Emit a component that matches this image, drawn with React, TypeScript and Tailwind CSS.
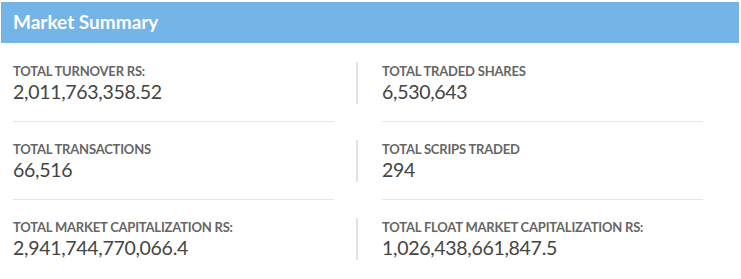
import React from "react";

const rows = [
  [
    { label: "TOTAL TURNOVER RS:", value: "2,011,763,358.52" },
    { label: "TOTAL TRADED SHARES", value: "6,530,643" },
  ],
  [
    { label: "TOTAL TRANSACTIONS", value: "66,516" },
    { label: "TOTAL SCRIPS TRADED", value: "294" },
  ],
  [
    { label: "TOTAL MARKET CAPITALIZATION RS:", value: "2,941,744,770,066.4" },
    { label: "TOTAL FLOAT MARKET CAPITALIZATION RS:", value: "1,026,438,661,847.5" },
  ],
];

function Cell({ label, value }: { label: string; value: string }) {
  return (
    <div>
      <div className="text-[13px] leading-[18px] font-bold tracking-[-0.2px] text-[#666666]">{label}</div>
      <div className="text-[19.5px] leading-[24px] tracking-[-0.3px] text-[#444444]">{value}</div>
    </div>
  );
}

export default function App() {
  return (
    <div className="w-[741px] h-[279px] bg-white pt-[2px] px-[1px]" style={{ fontFamily: "Lato, 'Noto Sans', sans-serif" }}>
      <div className="h-[41px] w-[738px] bg-[#74b4e6] flex items-center pl-[12px]">
        <span className="text-white text-[19px] font-bold">Market Summary</span>
      </div>
      <div className="pt-[19px] flex flex-col">
        {rows.map((row, i) => (
          <div key={i} className="flex">
            <div className="w-[355px] pl-[12px]">
              <Cell {...row[0]} />
              {i < rows.length - 1 && <div className="w-[321px] h-px bg-[#e6e6e6] mt-[17px] mb-[18px]" />}
            </div>
            <div className="w-[360px]">
              <div className="border-l-2 border-[#e3e3e3] pl-[24px]">
                <Cell {...row[1]} />
              </div>
              {i < rows.length - 1 && <div className="ml-[26px] w-[321px] h-px bg-[#e6e6e6] mt-[17px] mb-[18px]" />}
            </div>
          </div>
        ))}
      </div>
    </div>
  );
}
